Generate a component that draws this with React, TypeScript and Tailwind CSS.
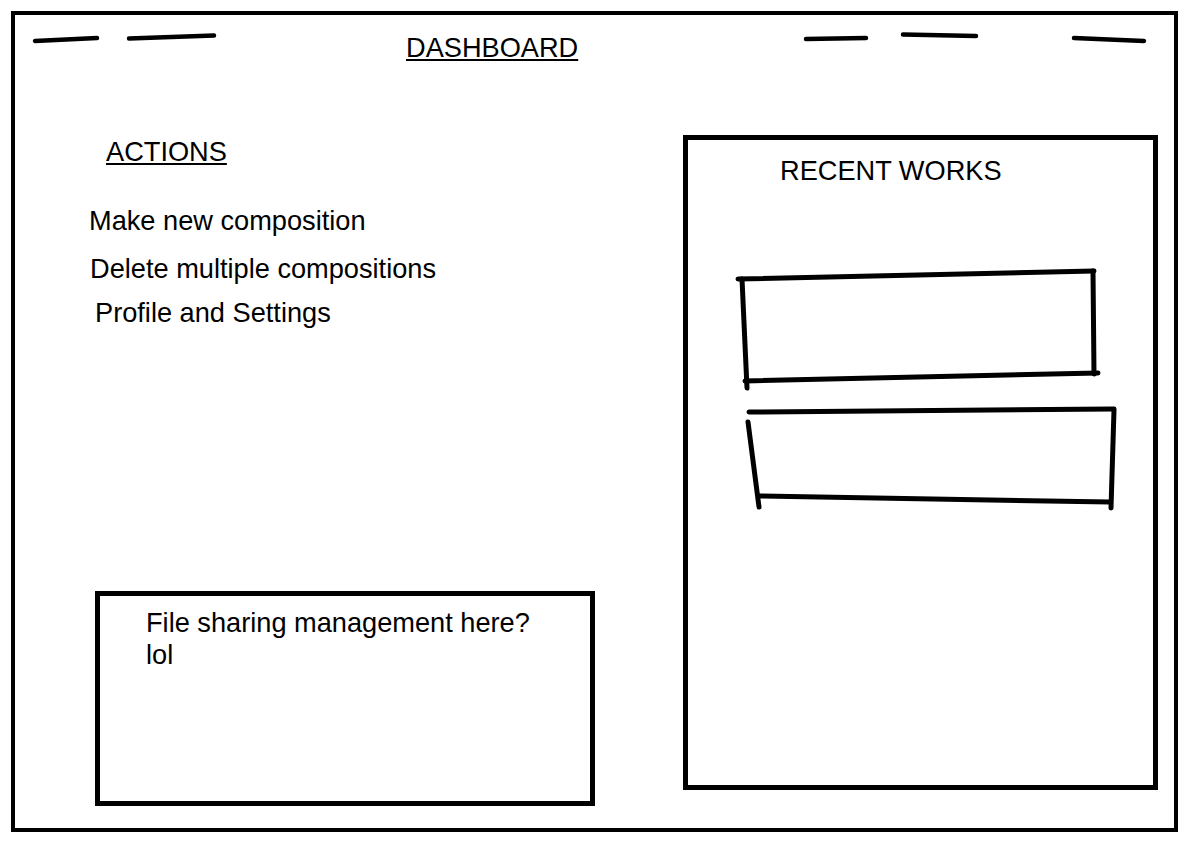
import React from 'react';

const actions = [
  { label: 'Make new composition', className: 'mt-[37px] ml-[74px]' },
  { label: 'Delete multiple compositions', className: 'mt-[16px] ml-[75px]' },
  { label: 'Profile and Settings', className: 'mt-[12px] ml-[80px]' },
];

// placeholder nav items, drawn as rough pen strokes
const NavDashes = ({ width, lines }: { width: number; lines: number[][] }) => (
  <svg width={width} height={16} className="block shrink-0">
    {lines.map(([x1, y1, x2, y2], i) => (
      <line key={i} x1={x1} y1={y1} x2={x2} y2={y2} stroke="#000" strokeWidth={4.5} strokeLinecap="round" />
    ))}
  </svg>
);

// hand-drawn thumbnail boxes for recent works
const RecentSketch = () => {
  const strokes = [
    [50, 92, 406, 84],
    [405, 84, 406, 187],
    [57, 194, 410, 186],
    [54, 92, 59, 201],
    [61, 225, 426, 222],
    [60, 235, 71, 320],
    [71, 309, 422, 315],
    [426, 223, 423, 321],
  ];
  return (
    <svg width={465} height={330} className="block">
      {strokes.map(([x1, y1, x2, y2], i) => (
        <line key={i} x1={x1} y1={y1} x2={x2} y2={y2} stroke="#000" strokeWidth={5} strokeLinecap="round" />
      ))}
    </svg>
  );
};

const App: React.FC = () => {
  return (
    <div className="w-[1197px] h-[850px] bg-white pl-[11px] pt-[11px] text-black font-['Liberation_Sans',Arial,sans-serif] text-[27.2px] leading-[32px]">
      <div className="w-[1167px] h-[821px] border-4 border-black flex flex-col">
        <header className="flex items-start pt-[16px]">
          <div className="ml-[15px]">
            <NavDashes width={200} lines={[[5, 10, 67, 7], [99, 7.5, 184, 4.5]]} />
          </div>
          <h1 className="ml-[176px] mt-[1px] underline">DASHBOARD</h1>
          <div className="ml-[218px]">
            <NavDashes width={355} lines={[[10, 8, 70, 7], [107, 3.5, 180, 5], [278, 7, 348, 10]]} />
          </div>
        </header>

        <div className="flex items-start">
          <div className="w-[668px] flex flex-col items-start">
            <h2 className="mt-[72px] ml-[91px] underline">ACTIONS</h2>
            {actions.map((a) => (
              <button key={a.label} className={`${a.className} text-left cursor-pointer`}>
                {a.label}
              </button>
            ))}
            <div className="mt-[262px] ml-[80px] w-[500px] h-[215px] border-[5px] border-black pl-[46px] pt-[11px]">
              <p className="max-w-[400px]">File sharing management here? lol</p>
            </div>
          </div>

          <section className="mt-[71px] w-[475px] h-[655px] border-[5px] border-black">
            <h2 className="pt-[15px] pl-[92px]">RECENT WORKS</h2>
            <RecentSketch />
          </section>
        </div>
      </div>
    </div>
  );
};

export default App;
